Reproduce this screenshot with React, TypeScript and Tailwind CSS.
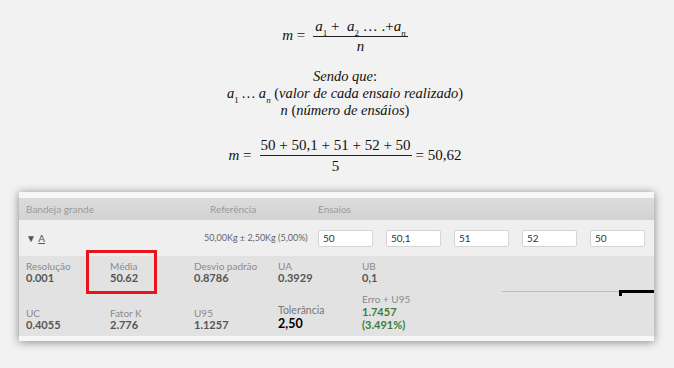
import React from "react";

const math = { fontFamily: '"Liberation Serif", "DejaVu Serif", serif' };
const ui = { fontFamily: 'Lato, "Noto Sans", sans-serif' };

function Sub({ children, it = false }: { children: React.ReactNode; it?: boolean }) {
  return (
    <sub className={"text-[9px] relative top-[1px] align-sub " + (it ? "italic" : "not-italic")}>{children}</sub>
  );
}

function Stat({ label, value }: { label: string; value: React.ReactNode }) {
  return (
    <div className="flex flex-col">
      <span className="text-[10px] leading-[12px] text-[#8a8a8a]">{label}</span>
      <span className="text-[11px] leading-[12px] font-bold text-[#555]">{value}</span>
    </div>
  );
}

export default function App() {
  const ensaios = ["50", "50,1", "51", "52", "50"];
  return (
    <div className="w-[674px] h-[368px] bg-[#f2f2f2] overflow-hidden relative">
      {/* formula section */}
      <div className="flex flex-col items-center pl-[16px] pt-[16px] text-[#111]" style={math}>
        <div className="flex items-center italic text-[15px]">
          <span className="mr-[8px]">m <span className="not-italic">=</span></span>
          <div className="flex flex-col items-center">
            <span className="px-[2px] leading-[20px]">
              a<Sub>1</Sub> <span className="not-italic">+</span>&nbsp; a<Sub>2</Sub> <span className="not-italic">… .</span><span className="not-italic">+</span>a<Sub it>n</Sub>
            </span>
            <div className="h-[1px] w-full bg-[#222]" />
            <span className="leading-[18px]">n</span>
          </div>
        </div>
        <div className="mt-[13px] flex flex-col items-center italic text-[14.5px] leading-[17px]">
          <span>Sendo que<span className="not-italic">:</span></span>
          <span>a<Sub>1</Sub> … a<Sub it>n</Sub> <span className="not-italic">(</span>valor de cada ensaio realizado<span className="not-italic">)</span></span>
          <span>n <span className="not-italic">(</span>número de ensáios<span className="not-italic">)</span></span>
        </div>
        <div className="mt-[16px] flex items-center text-[15px]">
          <span className="mr-[8px]"><span className="italic">m</span> =</span>
          <div className="flex flex-col items-center">
            <span className="px-[1px] leading-[20px]">50 + 50,1 + 51 + 52 + 50</span>
            <div className="h-[1px] w-full bg-[#222]" />
            <span className="leading-[20px]">5</span>
          </div>
          <span className="ml-[4px]">= 50,62</span>
        </div>
      </div>

      {/* panel */}
      <div className="absolute left-[19px] top-[192px] w-[635px] bg-[#f6f6f6] shadow-[0_1px_9px_rgba(0,0,0,0.45)]" style={ui}>
        <div className="h-[6px] bg-[#f7f7f7]" />
        <div className="h-[22px] bg-gradient-to-b from-[#dcdcdc] to-[#d2d2d2] flex items-center text-[10px] text-[#9a9a9a]">
          <span className="ml-[7px] w-[184px]">Bandeja grande</span>
          <span className="w-[108px]">Referência</span>
          <span>Ensaios</span>
        </div>
        <div className="h-[36px] bg-[#efefef] flex items-center text-[10px]">
          <span className="ml-[7px] w-[178px] shrink-0 text-[#555]">▼ <span className="underline">A</span></span>
          <span className="w-[114px] shrink-0 whitespace-nowrap text-[9px] text-[#666]">50,00Kg ± 2,50Kg (5,00%)</span>
          <div className="flex gap-[13px]">
            {ensaios.map((v, i) => (
              <div key={i} className="w-[55px] h-[17px] bg-white border border-[#d4d4d4] rounded-[2px] text-[10px] text-[#333] pl-[4px] leading-[15px]">
                {v}
              </div>
            ))}
          </div>
        </div>
        <div className="relative h-[80px] bg-[#e2e2e2] pl-[7px] pt-[4px]">
          <div className="grid grid-cols-[84px_84px_84px_84px_84px]">
            <Stat label="Resolução" value="0.001" />
            <Stat label="Média" value="50.62" />
            <Stat label="Desvio padrão" value="0.8786" />
            <Stat label="UA" value="0.3929" />
            <Stat label="UB" value="0,1" />
          </div>
          <div className="grid grid-cols-[84px_84px_84px_84px_84px] items-end mt-[9px]">
            <Stat label="UC" value="0.4055" />
            <Stat label="Fator K" value="2.776" />
            <Stat label="U95" value="1.1257" />
            <div className="flex flex-col">
              <span className="text-[10.5px] leading-[12px] text-[#777]">Tolerância</span>
              <span className="text-[12.5px] leading-[15px] font-bold text-black">2,50</span>
            </div>
            <div className="flex flex-col">
              <span className="text-[10px] leading-[12px] text-[#8a8a8a]">Erro + U95</span>
              <span className="text-[11px] leading-[13px] font-bold text-[#3b7d3b]">1.7457</span>
              <span className="text-[11px] leading-[13px] font-bold text-[#3b7d3b]">(3.491%)</span>
            </div>
          </div>
          <svg className="absolute left-[483px] top-[34px]" width="152" height="8">
            <line x1="0" y1="1.5" x2="118" y2="1.5" stroke="#bdbdbd" strokeWidth="1" />
            <rect x="117" y="0" width="35" height="3" fill="#000" />
            <rect x="117" y="0" width="3" height="6" fill="#000" />
          </svg>
        </div>
        <div className="h-[5px] bg-[#f7f7f7]" />
      </div>

      {/* red annotation */}
      <div className="absolute left-[86px] top-[250px] w-[71px] h-[44px] border-[3px] border-[#e8141c]" />
    </div>
  );
}
